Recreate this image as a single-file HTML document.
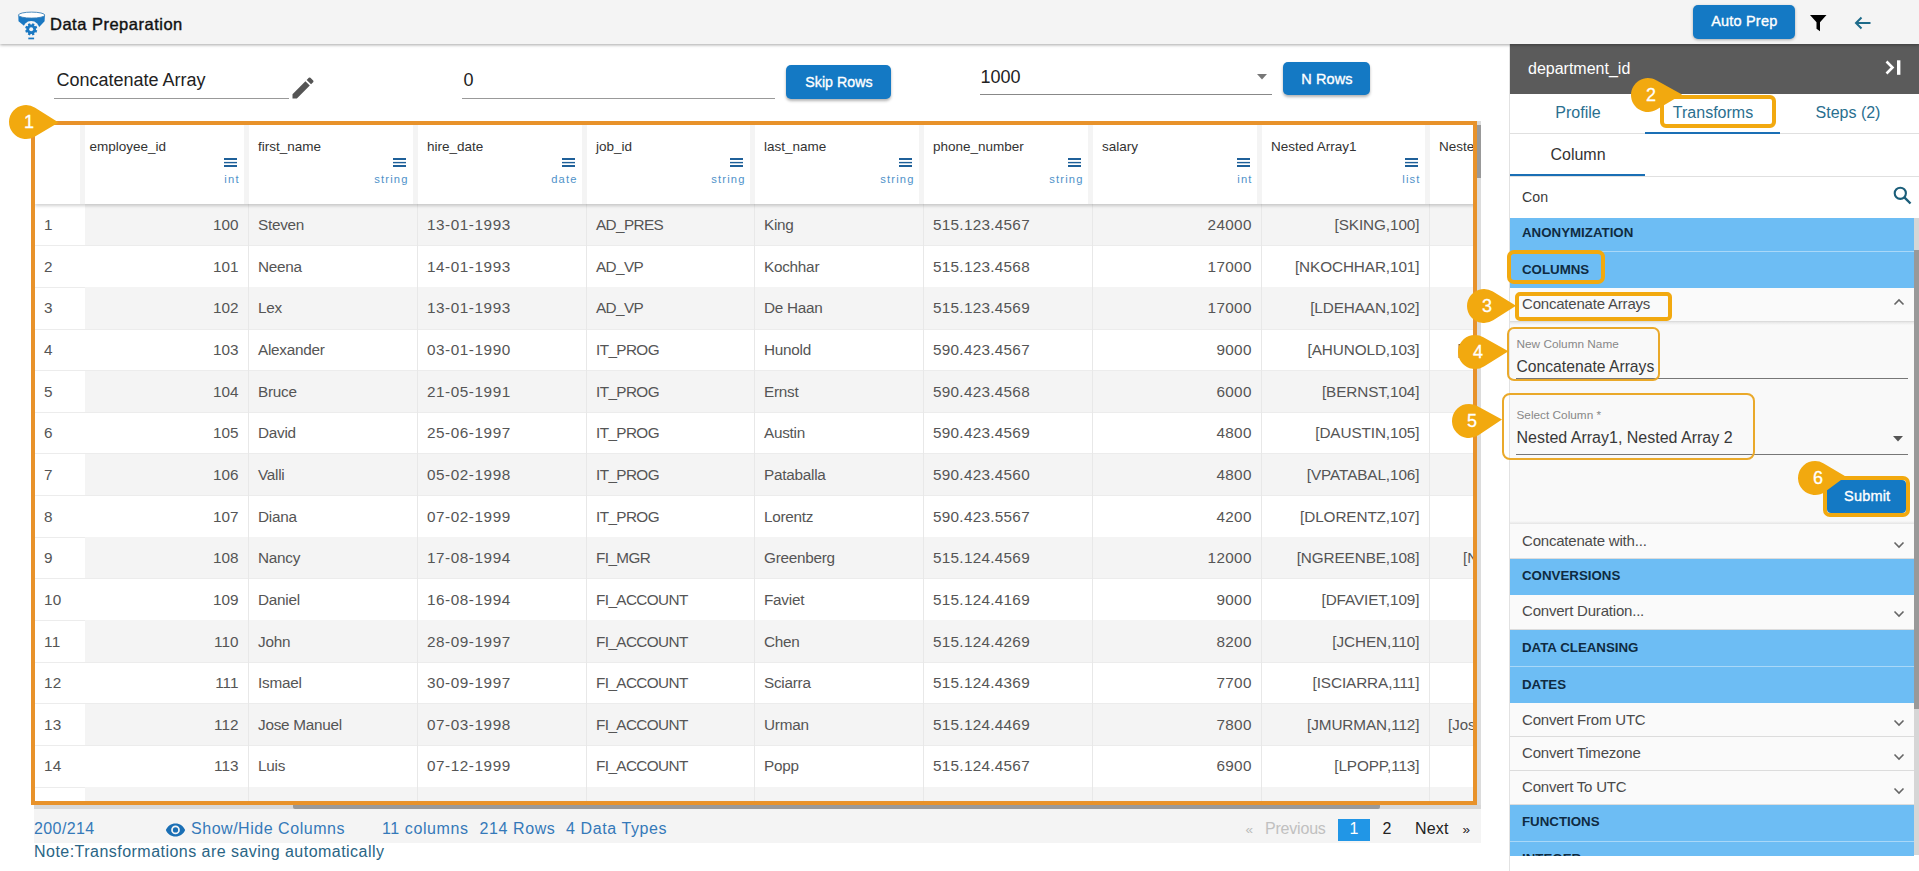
<!DOCTYPE html><html><head><meta charset="utf-8"><style>
html,body{margin:0;padding:0;}
body{width:1919px;height:871px;position:relative;overflow:hidden;background:#fff;font-family:"Liberation Sans", sans-serif;}
.t{position:absolute;line-height:20px;white-space:nowrap;}
.r{position:absolute;}
</style></head><body>

<div class="r" style="left:0px;top:0px;width:1919px;height:44px;background:#f4f4f4;box-shadow:0 1px 3px rgba(0,0,0,0.35);z-index:2"></div>
<div class="r" style="left:0;top:0;width:1919px;height:44px;z-index:3">
<svg class="r" style="left:14px;top:8px" width="36" height="34" viewBox="0 0 36 34">
<path d="M4.3,7.2 Q17.6,11.6 30.9,7.2 L30.6,13.3 L25.4,18.8 L17.2,28 L9.4,17.2 L4.5,13.3 Z" fill="#1a78c2"/>
<circle cx="17.2" cy="21.3" r="8.3" fill="#f4f4f4"/>
<ellipse cx="17.6" cy="7.1" rx="13.2" ry="3.0" fill="#fff" stroke="#3a80b8" stroke-width="0.9"/>
<circle cx="17.2" cy="21.3" r="4.8" fill="#1a78c2"/>
<rect x="16" y="15.2" width="2.4" height="2.5" transform="rotate(22.5 17.2 21.3)" fill="#1a78c2"/><rect x="16" y="15.2" width="2.4" height="2.5" transform="rotate(67.5 17.2 21.3)" fill="#1a78c2"/><rect x="16" y="15.2" width="2.4" height="2.5" transform="rotate(112.5 17.2 21.3)" fill="#1a78c2"/><rect x="16" y="15.2" width="2.4" height="2.5" transform="rotate(157.5 17.2 21.3)" fill="#1a78c2"/><rect x="16" y="15.2" width="2.4" height="2.5" transform="rotate(202.5 17.2 21.3)" fill="#1a78c2"/><rect x="16" y="15.2" width="2.4" height="2.5" transform="rotate(247.5 17.2 21.3)" fill="#1a78c2"/><rect x="16" y="15.2" width="2.4" height="2.5" transform="rotate(292.5 17.2 21.3)" fill="#1a78c2"/><rect x="16" y="15.2" width="2.4" height="2.5" transform="rotate(337.5 17.2 21.3)" fill="#1a78c2"/>
<circle cx="17.2" cy="21.3" r="2.0" fill="#f4f4f4"/>
<rect x="14.3" y="29.6" width="5.8" height="1.7" fill="#1a78c2"/>
</svg>
<div class="t" style="left:50px;top:14.48px;font-size:16.5px;color:#111;font-weight:400;letter-spacing:0.5px;-webkit-text-stroke:0.4px #111;">Data Preparation</div>
<div class="r" style="left:1693px;top:5px;width:102px;height:34px;background:#1479c4;border-radius:5px;box-shadow:0 1px 3px rgba(0,0,0,0.3)"></div>
<div class="t" style="left:1444.3px;width:600px;text-align:center;top:10.78px;font-size:14.5px;color:#fff;font-weight:400;letter-spacing:0.2px;-webkit-text-stroke:0.35px #fff;">Auto Prep</div>
<svg class="r" style="left:1809.5px;top:14.7px" width="17" height="17" viewBox="0 0 17 17"><path d="M0,0 L16.5,0 L10,7.3 L10,16.3 L6.5,13.8 L6.5,7.3 Z" fill="#000"/></svg>
<svg class="r" style="left:1854px;top:16px" width="18" height="14" viewBox="0 0 18 14"><path d="M16.5,7 L2,7 M7.5,1.5 L2,7 L7.5,12.5" fill="none" stroke="#1e6b8a" stroke-width="2"/></svg>
</div>
<div class="t" style="left:56.5px;top:69.76px;font-size:18px;color:#222;font-weight:400;">Concatenate Array</div>
<div class="r" style="left:54px;top:98px;width:235px;height:1px;background:#999"></div>
<svg class="r" style="left:288.5px;top:73.5px" width="28" height="28" viewBox="0 0 24 24"><path d="M3 17.25V21h3.75L17.81 9.94l-3.75-3.75L3 17.25zM20.71 7.04c.39-.39.39-1.02 0-1.41l-2.34-2.34a.9959.9959 0 0 0-1.41 0l-1.83 1.83 3.75 3.75 1.83-1.83z" fill="#555"/></svg>
<div class="t" style="left:463.5px;top:69.76px;font-size:18px;color:#222;font-weight:400;">0</div>
<div class="r" style="left:462px;top:98px;width:313px;height:1px;background:#999"></div>
<div class="r" style="left:786px;top:65px;width:105px;height:34px;background:#1479c4;border-radius:5px;box-shadow:0 2px 3px rgba(0,0,0,0.3)"></div>
<div class="t" style="left:539px;width:600px;text-align:center;top:71.78px;font-size:14.2px;color:#fff;font-weight:400;letter-spacing:0.05px;-webkit-text-stroke:0.35px #fff;">Skip Rows</div>
<div class="t" style="left:980.5px;top:66.96px;font-size:18px;color:#222;font-weight:400;">1000</div>
<div class="r" style="left:980px;top:94px;width:292px;height:1px;background:#888"></div>
<svg class="r" style="left:1257px;top:74px" width="10" height="6"><path d="M0,0 L10,0 L5,5.5 Z" fill="#777"/></svg>
<div class="r" style="left:1283px;top:62px;width:87px;height:33px;background:#1479c4;border-radius:5px;box-shadow:0 2px 3px rgba(0,0,0,0.3)"></div>
<div class="t" style="left:1027px;width:600px;text-align:center;top:68.98px;font-size:14.5px;color:#fff;font-weight:400;letter-spacing:0.1px;-webkit-text-stroke:0.35px #fff;">N Rows</div>
<div class="r" style="left:35px;top:125px;width:1438px;height:676px;overflow:hidden;background:#fff">
<div class="r" style="left:50px;top:79.0px;width:1514px;height:41.64px;background:#f4f4f4"></div>
<div class="r" style="left:0px;top:120.24px;width:1564px;height:1px;background:#ececec"></div>
<div class="r" style="left:0px;top:161.88px;width:1564px;height:1px;background:#ececec"></div>
<div class="r" style="left:50px;top:162.28px;width:1514px;height:41.64px;background:#f4f4f4"></div>
<div class="r" style="left:0px;top:203.52px;width:1564px;height:1px;background:#ececec"></div>
<div class="r" style="left:0px;top:245.16px;width:1564px;height:1px;background:#ececec"></div>
<div class="r" style="left:50px;top:245.56px;width:1514px;height:41.64px;background:#f4f4f4"></div>
<div class="r" style="left:0px;top:286.8px;width:1564px;height:1px;background:#ececec"></div>
<div class="r" style="left:0px;top:328.44px;width:1564px;height:1px;background:#ececec"></div>
<div class="r" style="left:50px;top:328.84px;width:1514px;height:41.64px;background:#f4f4f4"></div>
<div class="r" style="left:0px;top:370.08px;width:1564px;height:1px;background:#ececec"></div>
<div class="r" style="left:0px;top:411.72px;width:1564px;height:1px;background:#ececec"></div>
<div class="r" style="left:50px;top:412.12px;width:1514px;height:41.64px;background:#f4f4f4"></div>
<div class="r" style="left:0px;top:453.36px;width:1564px;height:1px;background:#ececec"></div>
<div class="r" style="left:0px;top:495.0px;width:1564px;height:1px;background:#ececec"></div>
<div class="r" style="left:50px;top:495.4px;width:1514px;height:41.64px;background:#f4f4f4"></div>
<div class="r" style="left:0px;top:536.64px;width:1564px;height:1px;background:#ececec"></div>
<div class="r" style="left:0px;top:578.28px;width:1564px;height:1px;background:#ececec"></div>
<div class="r" style="left:50px;top:578.68px;width:1514px;height:41.64px;background:#f4f4f4"></div>
<div class="r" style="left:0px;top:619.92px;width:1564px;height:1px;background:#ececec"></div>
<div class="r" style="left:0px;top:661.56px;width:1564px;height:1px;background:#ececec"></div>
<div class="r" style="left:50px;top:661.96px;width:1514px;height:41.64px;background:#f4f4f4"></div>
<div class="r" style="left:0px;top:703.2px;width:1564px;height:1px;background:#ececec"></div>
<div class="r" style="left:213px;top:79px;width:1px;height:700px;background:#e8e8e8"></div>
<div class="r" style="left:382px;top:79px;width:1px;height:700px;background:#e8e8e8"></div>
<div class="r" style="left:551px;top:79px;width:1px;height:700px;background:#e8e8e8"></div>
<div class="r" style="left:719px;top:79px;width:1px;height:700px;background:#e8e8e8"></div>
<div class="r" style="left:888px;top:79px;width:1px;height:700px;background:#e8e8e8"></div>
<div class="r" style="left:1057px;top:79px;width:1px;height:700px;background:#e8e8e8"></div>
<div class="r" style="left:1226px;top:79px;width:1px;height:700px;background:#e8e8e8"></div>
<div class="r" style="left:1394px;top:79px;width:1px;height:700px;background:#e8e8e8"></div>
<div class="r" style="left:1564px;top:79px;width:1px;height:700px;background:#e8e8e8"></div>
<div class="t" style="left:9px;top:90.10px;font-size:15.3px;color:#555;font-weight:400;letter-spacing:0.3px;">1</div>
<div class="t" style="left:-396.5px;width:600px;text-align:right;top:90.10px;font-size:15.3px;color:#555;font-weight:400;letter-spacing:0.0px;">100</div>
<div class="t" style="left:223px;top:90.10px;font-size:15.3px;color:#555;font-weight:400;letter-spacing:-0.25px;">Steven</div>
<div class="t" style="left:392px;top:90.10px;font-size:15.3px;color:#555;font-weight:400;letter-spacing:0.55px;">13-01-1993</div>
<div class="t" style="left:561px;top:90.10px;font-size:15.3px;color:#555;font-weight:400;letter-spacing:-0.6px;">AD_PRES</div>
<div class="t" style="left:729px;top:90.10px;font-size:15.3px;color:#555;font-weight:400;letter-spacing:-0.25px;">King</div>
<div class="t" style="left:898px;top:90.10px;font-size:15.3px;color:#555;font-weight:400;letter-spacing:0.28px;">515.123.4567</div>
<div class="t" style="left:616.8499999999999px;width:600px;text-align:right;top:90.10px;font-size:15.3px;color:#555;font-weight:400;letter-spacing:0.35px;">24000</div>
<div class="t" style="left:784.4000000000001px;width:600px;text-align:right;top:90.10px;font-size:15.3px;color:#555;font-weight:400;letter-spacing:-0.1px;">[SKING,100]</div>
<div class="t" style="left:9px;top:131.74px;font-size:15.3px;color:#555;font-weight:400;letter-spacing:0.3px;">2</div>
<div class="t" style="left:-396.5px;width:600px;text-align:right;top:131.74px;font-size:15.3px;color:#555;font-weight:400;letter-spacing:0.0px;">101</div>
<div class="t" style="left:223px;top:131.74px;font-size:15.3px;color:#555;font-weight:400;letter-spacing:-0.25px;">Neena</div>
<div class="t" style="left:392px;top:131.74px;font-size:15.3px;color:#555;font-weight:400;letter-spacing:0.55px;">14-01-1993</div>
<div class="t" style="left:561px;top:131.74px;font-size:15.3px;color:#555;font-weight:400;letter-spacing:-0.6px;">AD_VP</div>
<div class="t" style="left:729px;top:131.74px;font-size:15.3px;color:#555;font-weight:400;letter-spacing:-0.25px;">Kochhar</div>
<div class="t" style="left:898px;top:131.74px;font-size:15.3px;color:#555;font-weight:400;letter-spacing:0.28px;">515.123.4568</div>
<div class="t" style="left:616.8499999999999px;width:600px;text-align:right;top:131.74px;font-size:15.3px;color:#555;font-weight:400;letter-spacing:0.35px;">17000</div>
<div class="t" style="left:784.4000000000001px;width:600px;text-align:right;top:131.74px;font-size:15.3px;color:#555;font-weight:400;letter-spacing:-0.1px;">[NKOCHHAR,101]</div>
<div class="t" style="left:9px;top:173.38px;font-size:15.3px;color:#555;font-weight:400;letter-spacing:0.3px;">3</div>
<div class="t" style="left:-396.5px;width:600px;text-align:right;top:173.38px;font-size:15.3px;color:#555;font-weight:400;letter-spacing:0.0px;">102</div>
<div class="t" style="left:223px;top:173.38px;font-size:15.3px;color:#555;font-weight:400;letter-spacing:-0.25px;">Lex</div>
<div class="t" style="left:392px;top:173.38px;font-size:15.3px;color:#555;font-weight:400;letter-spacing:0.55px;">13-01-1993</div>
<div class="t" style="left:561px;top:173.38px;font-size:15.3px;color:#555;font-weight:400;letter-spacing:-0.6px;">AD_VP</div>
<div class="t" style="left:729px;top:173.38px;font-size:15.3px;color:#555;font-weight:400;letter-spacing:-0.25px;">De Haan</div>
<div class="t" style="left:898px;top:173.38px;font-size:15.3px;color:#555;font-weight:400;letter-spacing:0.28px;">515.123.4569</div>
<div class="t" style="left:616.8499999999999px;width:600px;text-align:right;top:173.38px;font-size:15.3px;color:#555;font-weight:400;letter-spacing:0.35px;">17000</div>
<div class="t" style="left:784.4000000000001px;width:600px;text-align:right;top:173.38px;font-size:15.3px;color:#555;font-weight:400;letter-spacing:-0.1px;">[LDEHAAN,102]</div>
<div class="t" style="left:9px;top:215.02px;font-size:15.3px;color:#555;font-weight:400;letter-spacing:0.3px;">4</div>
<div class="t" style="left:-396.5px;width:600px;text-align:right;top:215.02px;font-size:15.3px;color:#555;font-weight:400;letter-spacing:0.0px;">103</div>
<div class="t" style="left:223px;top:215.02px;font-size:15.3px;color:#555;font-weight:400;letter-spacing:-0.25px;">Alexander</div>
<div class="t" style="left:392px;top:215.02px;font-size:15.3px;color:#555;font-weight:400;letter-spacing:0.55px;">03-01-1990</div>
<div class="t" style="left:561px;top:215.02px;font-size:15.3px;color:#555;font-weight:400;letter-spacing:-0.6px;">IT_PROG</div>
<div class="t" style="left:729px;top:215.02px;font-size:15.3px;color:#555;font-weight:400;letter-spacing:-0.25px;">Hunold</div>
<div class="t" style="left:898px;top:215.02px;font-size:15.3px;color:#555;font-weight:400;letter-spacing:0.28px;">590.423.4567</div>
<div class="t" style="left:616.8499999999999px;width:600px;text-align:right;top:215.02px;font-size:15.3px;color:#555;font-weight:400;letter-spacing:0.35px;">9000</div>
<div class="t" style="left:784.4000000000001px;width:600px;text-align:right;top:215.02px;font-size:15.3px;color:#555;font-weight:400;letter-spacing:-0.1px;">[AHUNOLD,103]</div>
<div class="t" style="left:1422.5px;top:215.12px;font-size:15px;color:#555;font-weight:400;">[A</div>
<div class="t" style="left:9px;top:256.66px;font-size:15.3px;color:#555;font-weight:400;letter-spacing:0.3px;">5</div>
<div class="t" style="left:-396.5px;width:600px;text-align:right;top:256.66px;font-size:15.3px;color:#555;font-weight:400;letter-spacing:0.0px;">104</div>
<div class="t" style="left:223px;top:256.66px;font-size:15.3px;color:#555;font-weight:400;letter-spacing:-0.25px;">Bruce</div>
<div class="t" style="left:392px;top:256.66px;font-size:15.3px;color:#555;font-weight:400;letter-spacing:0.55px;">21-05-1991</div>
<div class="t" style="left:561px;top:256.66px;font-size:15.3px;color:#555;font-weight:400;letter-spacing:-0.6px;">IT_PROG</div>
<div class="t" style="left:729px;top:256.66px;font-size:15.3px;color:#555;font-weight:400;letter-spacing:-0.25px;">Ernst</div>
<div class="t" style="left:898px;top:256.66px;font-size:15.3px;color:#555;font-weight:400;letter-spacing:0.28px;">590.423.4568</div>
<div class="t" style="left:616.8499999999999px;width:600px;text-align:right;top:256.66px;font-size:15.3px;color:#555;font-weight:400;letter-spacing:0.35px;">6000</div>
<div class="t" style="left:784.4000000000001px;width:600px;text-align:right;top:256.66px;font-size:15.3px;color:#555;font-weight:400;letter-spacing:-0.1px;">[BERNST,104]</div>
<div class="t" style="left:9px;top:298.30px;font-size:15.3px;color:#555;font-weight:400;letter-spacing:0.3px;">6</div>
<div class="t" style="left:-396.5px;width:600px;text-align:right;top:298.30px;font-size:15.3px;color:#555;font-weight:400;letter-spacing:0.0px;">105</div>
<div class="t" style="left:223px;top:298.30px;font-size:15.3px;color:#555;font-weight:400;letter-spacing:-0.25px;">David</div>
<div class="t" style="left:392px;top:298.30px;font-size:15.3px;color:#555;font-weight:400;letter-spacing:0.55px;">25-06-1997</div>
<div class="t" style="left:561px;top:298.30px;font-size:15.3px;color:#555;font-weight:400;letter-spacing:-0.6px;">IT_PROG</div>
<div class="t" style="left:729px;top:298.30px;font-size:15.3px;color:#555;font-weight:400;letter-spacing:-0.25px;">Austin</div>
<div class="t" style="left:898px;top:298.30px;font-size:15.3px;color:#555;font-weight:400;letter-spacing:0.28px;">590.423.4569</div>
<div class="t" style="left:616.8499999999999px;width:600px;text-align:right;top:298.30px;font-size:15.3px;color:#555;font-weight:400;letter-spacing:0.35px;">4800</div>
<div class="t" style="left:784.4000000000001px;width:600px;text-align:right;top:298.30px;font-size:15.3px;color:#555;font-weight:400;letter-spacing:-0.1px;">[DAUSTIN,105]</div>
<div class="t" style="left:9px;top:339.94px;font-size:15.3px;color:#555;font-weight:400;letter-spacing:0.3px;">7</div>
<div class="t" style="left:-396.5px;width:600px;text-align:right;top:339.94px;font-size:15.3px;color:#555;font-weight:400;letter-spacing:0.0px;">106</div>
<div class="t" style="left:223px;top:339.94px;font-size:15.3px;color:#555;font-weight:400;letter-spacing:-0.25px;">Valli</div>
<div class="t" style="left:392px;top:339.94px;font-size:15.3px;color:#555;font-weight:400;letter-spacing:0.55px;">05-02-1998</div>
<div class="t" style="left:561px;top:339.94px;font-size:15.3px;color:#555;font-weight:400;letter-spacing:-0.6px;">IT_PROG</div>
<div class="t" style="left:729px;top:339.94px;font-size:15.3px;color:#555;font-weight:400;letter-spacing:-0.25px;">Pataballa</div>
<div class="t" style="left:898px;top:339.94px;font-size:15.3px;color:#555;font-weight:400;letter-spacing:0.28px;">590.423.4560</div>
<div class="t" style="left:616.8499999999999px;width:600px;text-align:right;top:339.94px;font-size:15.3px;color:#555;font-weight:400;letter-spacing:0.35px;">4800</div>
<div class="t" style="left:784.4000000000001px;width:600px;text-align:right;top:339.94px;font-size:15.3px;color:#555;font-weight:400;letter-spacing:-0.1px;">[VPATABAL,106]</div>
<div class="t" style="left:9px;top:381.58px;font-size:15.3px;color:#555;font-weight:400;letter-spacing:0.3px;">8</div>
<div class="t" style="left:-396.5px;width:600px;text-align:right;top:381.58px;font-size:15.3px;color:#555;font-weight:400;letter-spacing:0.0px;">107</div>
<div class="t" style="left:223px;top:381.58px;font-size:15.3px;color:#555;font-weight:400;letter-spacing:-0.25px;">Diana</div>
<div class="t" style="left:392px;top:381.58px;font-size:15.3px;color:#555;font-weight:400;letter-spacing:0.55px;">07-02-1999</div>
<div class="t" style="left:561px;top:381.58px;font-size:15.3px;color:#555;font-weight:400;letter-spacing:-0.6px;">IT_PROG</div>
<div class="t" style="left:729px;top:381.58px;font-size:15.3px;color:#555;font-weight:400;letter-spacing:-0.25px;">Lorentz</div>
<div class="t" style="left:898px;top:381.58px;font-size:15.3px;color:#555;font-weight:400;letter-spacing:0.28px;">590.423.5567</div>
<div class="t" style="left:616.8499999999999px;width:600px;text-align:right;top:381.58px;font-size:15.3px;color:#555;font-weight:400;letter-spacing:0.35px;">4200</div>
<div class="t" style="left:784.4000000000001px;width:600px;text-align:right;top:381.58px;font-size:15.3px;color:#555;font-weight:400;letter-spacing:-0.1px;">[DLORENTZ,107]</div>
<div class="t" style="left:9px;top:423.22px;font-size:15.3px;color:#555;font-weight:400;letter-spacing:0.3px;">9</div>
<div class="t" style="left:-396.5px;width:600px;text-align:right;top:423.22px;font-size:15.3px;color:#555;font-weight:400;letter-spacing:0.0px;">108</div>
<div class="t" style="left:223px;top:423.22px;font-size:15.3px;color:#555;font-weight:400;letter-spacing:-0.25px;">Nancy</div>
<div class="t" style="left:392px;top:423.22px;font-size:15.3px;color:#555;font-weight:400;letter-spacing:0.55px;">17-08-1994</div>
<div class="t" style="left:561px;top:423.22px;font-size:15.3px;color:#555;font-weight:400;letter-spacing:-0.6px;">FI_MGR</div>
<div class="t" style="left:729px;top:423.22px;font-size:15.3px;color:#555;font-weight:400;letter-spacing:-0.25px;">Greenberg</div>
<div class="t" style="left:898px;top:423.22px;font-size:15.3px;color:#555;font-weight:400;letter-spacing:0.28px;">515.124.4569</div>
<div class="t" style="left:616.8499999999999px;width:600px;text-align:right;top:423.22px;font-size:15.3px;color:#555;font-weight:400;letter-spacing:0.35px;">12000</div>
<div class="t" style="left:784.4000000000001px;width:600px;text-align:right;top:423.22px;font-size:15.3px;color:#555;font-weight:400;letter-spacing:-0.1px;">[NGREENBE,108]</div>
<div class="t" style="left:1428px;top:423.32px;font-size:15px;color:#555;font-weight:400;">[N</div>
<div class="t" style="left:9px;top:464.86px;font-size:15.3px;color:#555;font-weight:400;letter-spacing:0.3px;">10</div>
<div class="t" style="left:-396.5px;width:600px;text-align:right;top:464.86px;font-size:15.3px;color:#555;font-weight:400;letter-spacing:0.0px;">109</div>
<div class="t" style="left:223px;top:464.86px;font-size:15.3px;color:#555;font-weight:400;letter-spacing:-0.25px;">Daniel</div>
<div class="t" style="left:392px;top:464.86px;font-size:15.3px;color:#555;font-weight:400;letter-spacing:0.55px;">16-08-1994</div>
<div class="t" style="left:561px;top:464.86px;font-size:15.3px;color:#555;font-weight:400;letter-spacing:-0.6px;">FI_ACCOUNT</div>
<div class="t" style="left:729px;top:464.86px;font-size:15.3px;color:#555;font-weight:400;letter-spacing:-0.25px;">Faviet</div>
<div class="t" style="left:898px;top:464.86px;font-size:15.3px;color:#555;font-weight:400;letter-spacing:0.28px;">515.124.4169</div>
<div class="t" style="left:616.8499999999999px;width:600px;text-align:right;top:464.86px;font-size:15.3px;color:#555;font-weight:400;letter-spacing:0.35px;">9000</div>
<div class="t" style="left:784.4000000000001px;width:600px;text-align:right;top:464.86px;font-size:15.3px;color:#555;font-weight:400;letter-spacing:-0.1px;">[DFAVIET,109]</div>
<div class="t" style="left:9px;top:506.50px;font-size:15.3px;color:#555;font-weight:400;letter-spacing:0.3px;">11</div>
<div class="t" style="left:-396.5px;width:600px;text-align:right;top:506.50px;font-size:15.3px;color:#555;font-weight:400;letter-spacing:0.0px;">110</div>
<div class="t" style="left:223px;top:506.50px;font-size:15.3px;color:#555;font-weight:400;letter-spacing:-0.25px;">John</div>
<div class="t" style="left:392px;top:506.50px;font-size:15.3px;color:#555;font-weight:400;letter-spacing:0.55px;">28-09-1997</div>
<div class="t" style="left:561px;top:506.50px;font-size:15.3px;color:#555;font-weight:400;letter-spacing:-0.6px;">FI_ACCOUNT</div>
<div class="t" style="left:729px;top:506.50px;font-size:15.3px;color:#555;font-weight:400;letter-spacing:-0.25px;">Chen</div>
<div class="t" style="left:898px;top:506.50px;font-size:15.3px;color:#555;font-weight:400;letter-spacing:0.28px;">515.124.4269</div>
<div class="t" style="left:616.8499999999999px;width:600px;text-align:right;top:506.50px;font-size:15.3px;color:#555;font-weight:400;letter-spacing:0.35px;">8200</div>
<div class="t" style="left:784.4000000000001px;width:600px;text-align:right;top:506.50px;font-size:15.3px;color:#555;font-weight:400;letter-spacing:-0.1px;">[JCHEN,110]</div>
<div class="t" style="left:9px;top:548.14px;font-size:15.3px;color:#555;font-weight:400;letter-spacing:0.3px;">12</div>
<div class="t" style="left:-396.5px;width:600px;text-align:right;top:548.14px;font-size:15.3px;color:#555;font-weight:400;letter-spacing:0.0px;">111</div>
<div class="t" style="left:223px;top:548.14px;font-size:15.3px;color:#555;font-weight:400;letter-spacing:-0.25px;">Ismael</div>
<div class="t" style="left:392px;top:548.14px;font-size:15.3px;color:#555;font-weight:400;letter-spacing:0.55px;">30-09-1997</div>
<div class="t" style="left:561px;top:548.14px;font-size:15.3px;color:#555;font-weight:400;letter-spacing:-0.6px;">FI_ACCOUNT</div>
<div class="t" style="left:729px;top:548.14px;font-size:15.3px;color:#555;font-weight:400;letter-spacing:-0.25px;">Sciarra</div>
<div class="t" style="left:898px;top:548.14px;font-size:15.3px;color:#555;font-weight:400;letter-spacing:0.28px;">515.124.4369</div>
<div class="t" style="left:616.8499999999999px;width:600px;text-align:right;top:548.14px;font-size:15.3px;color:#555;font-weight:400;letter-spacing:0.35px;">7700</div>
<div class="t" style="left:784.4000000000001px;width:600px;text-align:right;top:548.14px;font-size:15.3px;color:#555;font-weight:400;letter-spacing:-0.1px;">[ISCIARRA,111]</div>
<div class="t" style="left:9px;top:589.78px;font-size:15.3px;color:#555;font-weight:400;letter-spacing:0.3px;">13</div>
<div class="t" style="left:-396.5px;width:600px;text-align:right;top:589.78px;font-size:15.3px;color:#555;font-weight:400;letter-spacing:0.0px;">112</div>
<div class="t" style="left:223px;top:589.78px;font-size:15.3px;color:#555;font-weight:400;letter-spacing:-0.25px;">Jose Manuel</div>
<div class="t" style="left:392px;top:589.78px;font-size:15.3px;color:#555;font-weight:400;letter-spacing:0.55px;">07-03-1998</div>
<div class="t" style="left:561px;top:589.78px;font-size:15.3px;color:#555;font-weight:400;letter-spacing:-0.6px;">FI_ACCOUNT</div>
<div class="t" style="left:729px;top:589.78px;font-size:15.3px;color:#555;font-weight:400;letter-spacing:-0.25px;">Urman</div>
<div class="t" style="left:898px;top:589.78px;font-size:15.3px;color:#555;font-weight:400;letter-spacing:0.28px;">515.124.4469</div>
<div class="t" style="left:616.8499999999999px;width:600px;text-align:right;top:589.78px;font-size:15.3px;color:#555;font-weight:400;letter-spacing:0.35px;">7800</div>
<div class="t" style="left:784.4000000000001px;width:600px;text-align:right;top:589.78px;font-size:15.3px;color:#555;font-weight:400;letter-spacing:-0.1px;">[JMURMAN,112]</div>
<div class="t" style="left:1413px;top:589.88px;font-size:15px;color:#555;font-weight:400;">[Jos</div>
<div class="t" style="left:9px;top:631.42px;font-size:15.3px;color:#555;font-weight:400;letter-spacing:0.3px;">14</div>
<div class="t" style="left:-396.5px;width:600px;text-align:right;top:631.42px;font-size:15.3px;color:#555;font-weight:400;letter-spacing:0.0px;">113</div>
<div class="t" style="left:223px;top:631.42px;font-size:15.3px;color:#555;font-weight:400;letter-spacing:-0.25px;">Luis</div>
<div class="t" style="left:392px;top:631.42px;font-size:15.3px;color:#555;font-weight:400;letter-spacing:0.55px;">07-12-1999</div>
<div class="t" style="left:561px;top:631.42px;font-size:15.3px;color:#555;font-weight:400;letter-spacing:-0.6px;">FI_ACCOUNT</div>
<div class="t" style="left:729px;top:631.42px;font-size:15.3px;color:#555;font-weight:400;letter-spacing:-0.25px;">Popp</div>
<div class="t" style="left:898px;top:631.42px;font-size:15.3px;color:#555;font-weight:400;letter-spacing:0.28px;">515.124.4567</div>
<div class="t" style="left:616.8499999999999px;width:600px;text-align:right;top:631.42px;font-size:15.3px;color:#555;font-weight:400;letter-spacing:0.35px;">6900</div>
<div class="t" style="left:784.4000000000001px;width:600px;text-align:right;top:631.42px;font-size:15.3px;color:#555;font-weight:400;letter-spacing:-0.1px;">[LPOPP,113]</div>
<div class="r" style="left:0px;top:0px;width:1564px;height:79px;background:#fff;box-shadow:0 2px 3px rgba(0,0,0,0.18)"></div>
<div class="r" style="left:45px;top:0px;width:5px;height:79px;background:#f4f4f4"></div>
<div class="r" style="left:209px;top:0px;width:5px;height:79px;background:#f4f4f4"></div>
<div class="r" style="left:378px;top:0px;width:5px;height:79px;background:#f4f4f4"></div>
<div class="r" style="left:547px;top:0px;width:5px;height:79px;background:#f4f4f4"></div>
<div class="r" style="left:715px;top:0px;width:5px;height:79px;background:#f4f4f4"></div>
<div class="r" style="left:884px;top:0px;width:5px;height:79px;background:#f4f4f4"></div>
<div class="r" style="left:1053px;top:0px;width:5px;height:79px;background:#f4f4f4"></div>
<div class="r" style="left:1222px;top:0px;width:5px;height:79px;background:#f4f4f4"></div>
<div class="r" style="left:1390px;top:0px;width:5px;height:79px;background:#f4f4f4"></div>
<div class="r" style="left:1560px;top:0px;width:5px;height:79px;background:#f4f4f4"></div>
<div class="t" style="left:54.5px;top:12.12px;font-size:13.5px;color:#333;font-weight:400;">employee_id</div>
<svg class="r" style="left:189px;top:33px" width="13" height="9"><rect x="0" y="0" width="13" height="2" fill="#1f6099"/><rect x="0" y="3.9" width="13" height="1.4" fill="#1f6099"/><rect x="0" y="7" width="13" height="2" fill="#1f6099"/></svg>
<div class="t" style="left:-395.3px;width:600px;text-align:right;top:43.92px;font-size:11.2px;color:#4f92c9;font-weight:400;letter-spacing:1.2px;">int</div>
<div class="t" style="left:223px;top:12.12px;font-size:13.5px;color:#333;font-weight:400;">first_name</div>
<svg class="r" style="left:358px;top:33px" width="13" height="9"><rect x="0" y="0" width="13" height="2" fill="#1f6099"/><rect x="0" y="3.9" width="13" height="1.4" fill="#1f6099"/><rect x="0" y="7" width="13" height="2" fill="#1f6099"/></svg>
<div class="t" style="left:-226.3px;width:600px;text-align:right;top:43.92px;font-size:11.2px;color:#4f92c9;font-weight:400;letter-spacing:1.2px;">string</div>
<div class="t" style="left:392px;top:12.12px;font-size:13.5px;color:#333;font-weight:400;">hire_date</div>
<svg class="r" style="left:527px;top:33px" width="13" height="9"><rect x="0" y="0" width="13" height="2" fill="#1f6099"/><rect x="0" y="3.9" width="13" height="1.4" fill="#1f6099"/><rect x="0" y="7" width="13" height="2" fill="#1f6099"/></svg>
<div class="t" style="left:-57.299999999999955px;width:600px;text-align:right;top:43.92px;font-size:11.2px;color:#4f92c9;font-weight:400;letter-spacing:1.2px;">date</div>
<div class="t" style="left:561px;top:12.12px;font-size:13.5px;color:#333;font-weight:400;">job_id</div>
<svg class="r" style="left:695px;top:33px" width="13" height="9"><rect x="0" y="0" width="13" height="2" fill="#1f6099"/><rect x="0" y="3.9" width="13" height="1.4" fill="#1f6099"/><rect x="0" y="7" width="13" height="2" fill="#1f6099"/></svg>
<div class="t" style="left:110.70000000000005px;width:600px;text-align:right;top:43.92px;font-size:11.2px;color:#4f92c9;font-weight:400;letter-spacing:1.2px;">string</div>
<div class="t" style="left:729px;top:12.12px;font-size:13.5px;color:#333;font-weight:400;">last_name</div>
<svg class="r" style="left:864px;top:33px" width="13" height="9"><rect x="0" y="0" width="13" height="2" fill="#1f6099"/><rect x="0" y="3.9" width="13" height="1.4" fill="#1f6099"/><rect x="0" y="7" width="13" height="2" fill="#1f6099"/></svg>
<div class="t" style="left:279.70000000000005px;width:600px;text-align:right;top:43.92px;font-size:11.2px;color:#4f92c9;font-weight:400;letter-spacing:1.2px;">string</div>
<div class="t" style="left:898px;top:12.12px;font-size:13.5px;color:#333;font-weight:400;">phone_number</div>
<svg class="r" style="left:1033px;top:33px" width="13" height="9"><rect x="0" y="0" width="13" height="2" fill="#1f6099"/><rect x="0" y="3.9" width="13" height="1.4" fill="#1f6099"/><rect x="0" y="7" width="13" height="2" fill="#1f6099"/></svg>
<div class="t" style="left:448.70000000000005px;width:600px;text-align:right;top:43.92px;font-size:11.2px;color:#4f92c9;font-weight:400;letter-spacing:1.2px;">string</div>
<div class="t" style="left:1067px;top:12.12px;font-size:13.5px;color:#333;font-weight:400;">salary</div>
<svg class="r" style="left:1202px;top:33px" width="13" height="9"><rect x="0" y="0" width="13" height="2" fill="#1f6099"/><rect x="0" y="3.9" width="13" height="1.4" fill="#1f6099"/><rect x="0" y="7" width="13" height="2" fill="#1f6099"/></svg>
<div class="t" style="left:617.7px;width:600px;text-align:right;top:43.92px;font-size:11.2px;color:#4f92c9;font-weight:400;letter-spacing:1.2px;">int</div>
<div class="t" style="left:1236px;top:12.12px;font-size:13.5px;color:#333;font-weight:400;">Nested Array1</div>
<svg class="r" style="left:1370px;top:33px" width="13" height="9"><rect x="0" y="0" width="13" height="2" fill="#1f6099"/><rect x="0" y="3.9" width="13" height="1.4" fill="#1f6099"/><rect x="0" y="7" width="13" height="2" fill="#1f6099"/></svg>
<div class="t" style="left:785.7px;width:600px;text-align:right;top:43.92px;font-size:11.2px;color:#4f92c9;font-weight:400;letter-spacing:1.2px;">list</div>
<div class="t" style="left:1404px;top:12.12px;font-size:13.5px;color:#333;font-weight:400;">Nested Array2</div>
</div>
<div class="r" style="left:1477px;top:121px;width:4px;height:688px;background:#dcdcdc"></div>
<div class="r" style="left:1477px;top:125px;width:4px;height:53px;background:#999"></div>
<div class="r" style="left:34px;top:805px;width:1447px;height:4px;background:#d8d8d8"></div>
<div class="r" style="left:293px;top:805px;width:1087px;height:4px;background:#999;border-radius:0 0 2px 2px"></div>
<div class="r" style="left:31px;top:121px;width:1438px;height:676px;border:4px solid #e8922a"></div>
<div class="r" style="left:34px;top:809px;width:1447px;height:34px;background:#f4f4f4"></div>
<div class="t" style="left:34px;top:819.46px;font-size:16px;color:#3479b9;font-weight:400;letter-spacing:0.4px;">200/214</div>
<svg class="r" style="left:165px;top:822px" width="21" height="15" viewBox="0 0 24 16"><path d="M12 1C7 1 2.7 4.1 1 8.5 2.7 12.9 7 16 12 16s9.3-3.1 11-7.5C21.3 4.1 17 1 12 1zm0 12.5a5 5 0 1 1 0-10 5 5 0 0 1 0 10zm0-8a3 3 0 1 0 0 6 3 3 0 0 0 0-6z" fill="#1a6fb5"/></svg>
<div class="t" style="left:191px;top:819.46px;font-size:16px;color:#3479b9;font-weight:400;letter-spacing:0.53px;">Show/Hide Columns</div>
<div class="t" style="left:382px;top:819.46px;font-size:16px;color:#3479b9;font-weight:400;letter-spacing:0.6px;">11 columns</div>
<div class="t" style="left:479.5px;top:819.46px;font-size:16px;color:#3479b9;font-weight:400;letter-spacing:0.6px;">214 Rows</div>
<div class="t" style="left:566px;top:819.46px;font-size:16px;color:#3479b9;font-weight:400;letter-spacing:0.6px;">4 Data Types</div>
<div class="t" style="left:1245.5px;top:819.82px;font-size:13.5px;color:#bbb;font-weight:400;">«</div>
<div class="t" style="left:1265px;top:819.46px;font-size:16px;color:#c0c0c0;font-weight:400;letter-spacing:-0.2px;">Previous</div>
<div class="r" style="left:1338px;top:819px;width:32px;height:22px;background:#2196e6"></div>
<div class="t" style="left:1054px;width:600px;text-align:center;top:819.46px;font-size:16px;color:#fff;font-weight:400;">1</div>
<div class="t" style="left:1087px;width:600px;text-align:center;top:819.46px;font-size:16px;color:#222;font-weight:400;">2</div>
<div class="t" style="left:1415px;top:819.46px;font-size:16px;color:#222;font-weight:400;letter-spacing:0.2px;">Next</div>
<div class="t" style="left:1462.5px;top:819.82px;font-size:13.5px;color:#222;font-weight:400;">»</div>
<div class="t" style="left:34px;top:842.46px;font-size:16px;color:#2a6585;font-weight:400;letter-spacing:0.47px;">Note:Transformations are saving automatically</div>
<div class="r" style="left:1509px;top:44px;width:1px;height:827px;background:#e2e2e2"></div>
<div class="r" style="left:1510px;top:44px;width:409px;height:50px;background:#5b5b5b"></div>
<div class="t" style="left:1528px;top:58.66px;font-size:16px;color:#fff;font-weight:400;">department_id</div>
<svg class="r" style="left:1884px;top:59px" width="18" height="17" viewBox="0 0 18 17"><path d="M2.5,2.5 L8.5,8.5 L2.5,14.5" fill="none" stroke="#fff" stroke-width="2.6"/><rect x="13" y="1.3" width="3.4" height="14.5" fill="#fff"/></svg>
<div class="r" style="left:1510px;top:94px;width:409px;height:40px;background:#fff"></div>
<div class="r" style="left:1510px;top:133px;width:409px;height:1px;background:#e0e0e0"></div>
<div class="r" style="left:1645px;top:132px;width:135px;height:2px;background:#1a6fb5"></div>
<div class="t" style="left:1278px;width:600px;text-align:center;top:103.46px;font-size:16px;color:#2a6f8f;font-weight:400;">Profile</div>
<div class="t" style="left:1413px;width:600px;text-align:center;top:103.46px;font-size:16px;color:#2a6f8f;font-weight:400;">Transforms</div>
<div class="t" style="left:1548px;width:600px;text-align:center;top:103.46px;font-size:16px;color:#2a6f8f;font-weight:400;">Steps (2)</div>
<div class="r" style="left:1510px;top:134px;width:409px;height:42px;background:#fff"></div>
<div class="r" style="left:1510px;top:176px;width:409px;height:1px;background:#e0e0e0"></div>
<div class="r" style="left:1510px;top:174px;width:135px;height:2px;background:#1a6fb5"></div>
<div class="t" style="left:1278px;width:600px;text-align:center;top:144.66px;font-size:16px;color:#333;font-weight:400;">Column</div>
<div class="t" style="left:1522px;top:186.88px;font-size:14.2px;color:#3a3a3a;font-weight:400;">Con</div>
<svg class="r" style="left:1893px;top:186px" width="19" height="19" viewBox="0 0 19 19"><circle cx="7.3" cy="7.3" r="5.6" fill="none" stroke="#1b5e7a" stroke-width="2.1"/><path d="M11.4,11.4 L17.5,17.5" stroke="#1b5e7a" stroke-width="2.4"/></svg>
<div class="r" style="left:1510px;top:218px;width:404px;height:33px;background:#6dbdf4"></div>
<div class="t" style="left:1522px;top:222.59px;font-size:13.3px;color:#0f2b42;font-weight:700;">ANONYMIZATION</div>
<div class="r" style="left:1510px;top:251px;width:404px;height:1px;background:#a9d8f8"></div>
<div class="r" style="left:1510px;top:252px;width:404px;height:36px;background:#6dbdf4"></div>
<div class="t" style="left:1522px;top:259.89px;font-size:13.3px;color:#0f2b42;font-weight:700;">COLUMNS</div>
<div class="r" style="left:1510px;top:288px;width:404px;height:34px;background:#fafafa;border-bottom:1px solid #dcdcdc;box-sizing:border-box"></div>
<div class="t" style="left:1522px;top:294.30px;font-size:15px;color:#4a4a4a;font-weight:400;letter-spacing:-0.2px;">Concatenate Arrays</div>
<svg class="r" style="left:1893px;top:298.0px" width="12" height="8"><path d="M1.5,6.5 L6,2 L10.5,6.5" fill="none" stroke="#666" stroke-width="1.6"/></svg>
<div class="r" style="left:1510px;top:322px;width:404px;height:202px;background:#f9f9f9"></div>
<div class="r" style="left:1510px;top:322px;width:404px;height:3px;background:linear-gradient(#e6e6e6,#f9f9f9)"></div>
<div class="t" style="left:1516.5px;top:333.81px;font-size:11.8px;color:#888;font-weight:400;">New Column Name</div>
<div class="t" style="left:1516.5px;top:357.36px;font-size:15.7px;color:#383838;font-weight:400;">Concatenate Arrays</div>
<div class="r" style="left:1516px;top:378px;width:392px;height:1px;background:#777"></div>
<div class="t" style="left:1516.5px;top:404.91px;font-size:11.8px;color:#888;font-weight:400;">Select Column *</div>
<div class="t" style="left:1516.5px;top:428.26px;font-size:16px;color:#383838;font-weight:400;">Nested Array1, Nested Array 2</div>
<div class="r" style="left:1516px;top:454px;width:392px;height:1px;background:#777"></div>
<svg class="r" style="left:1893px;top:436px" width="10" height="6"><path d="M0,0 L10,0 L5,5.5 Z" fill="#555"/></svg>
<div class="r" style="left:1827px;top:480px;width:79px;height:33px;background:#1479c4;border-radius:4px"></div>
<div class="t" style="left:1567.2px;width:600px;text-align:center;top:486.08px;font-size:14.5px;color:#fff;font-weight:400;letter-spacing:0.2px;-webkit-text-stroke:0.35px #fff;">Submit</div>
<div class="r" style="left:1510px;top:521px;width:404px;height:3px;background:linear-gradient(#f9f9f9,#e4e4e4)"></div>
<div class="r" style="left:1510px;top:524px;width:404px;height:35px;background:#fafafa;border-bottom:1px solid #dcdcdc;box-sizing:border-box"></div>
<div class="t" style="left:1522px;top:531.10px;font-size:15px;color:#4a4a4a;font-weight:400;letter-spacing:-0.2px;">Concatenate with...</div>
<svg class="r" style="left:1893px;top:540.7px" width="12" height="8"><path d="M1.5,1.5 L6,6 L10.5,1.5" fill="none" stroke="#666" stroke-width="1.6"/></svg>
<div class="r" style="left:1510px;top:559px;width:404px;height:36px;background:#6dbdf4"></div>
<div class="t" style="left:1522px;top:566.39px;font-size:13.3px;color:#0f2b42;font-weight:700;">CONVERSIONS</div>
<div class="r" style="left:1510px;top:595px;width:404px;height:35px;background:#fafafa;border-bottom:1px solid #dcdcdc;box-sizing:border-box"></div>
<div class="t" style="left:1522px;top:600.80px;font-size:15px;color:#4a4a4a;font-weight:400;letter-spacing:-0.2px;">Convert Duration...</div>
<svg class="r" style="left:1893px;top:610.4px" width="12" height="8"><path d="M1.5,1.5 L6,6 L10.5,1.5" fill="none" stroke="#666" stroke-width="1.6"/></svg>
<div class="r" style="left:1510px;top:630px;width:404px;height:36px;background:#6dbdf4"></div>
<div class="t" style="left:1522px;top:637.59px;font-size:13.3px;color:#0f2b42;font-weight:700;">DATA CLEANSING</div>
<div class="r" style="left:1510px;top:666px;width:404px;height:1px;background:#a9d8f8"></div>
<div class="r" style="left:1510px;top:667px;width:404px;height:36px;background:#6dbdf4"></div>
<div class="t" style="left:1522px;top:674.59px;font-size:13.3px;color:#0f2b42;font-weight:700;">DATES</div>
<div class="r" style="left:1510px;top:703px;width:404px;height:34px;background:#fafafa;border-bottom:1px solid #dcdcdc;box-sizing:border-box"></div>
<div class="t" style="left:1522px;top:709.50px;font-size:15px;color:#4a4a4a;font-weight:400;letter-spacing:-0.2px;">Convert From UTC</div>
<svg class="r" style="left:1893px;top:719.1px" width="12" height="8"><path d="M1.5,1.5 L6,6 L10.5,1.5" fill="none" stroke="#666" stroke-width="1.6"/></svg>
<div class="r" style="left:1510px;top:737px;width:404px;height:34px;background:#fafafa;border-bottom:1px solid #dcdcdc;box-sizing:border-box"></div>
<div class="t" style="left:1522px;top:743.30px;font-size:15px;color:#4a4a4a;font-weight:400;letter-spacing:-0.2px;">Convert Timezone</div>
<svg class="r" style="left:1893px;top:752.9px" width="12" height="8"><path d="M1.5,1.5 L6,6 L10.5,1.5" fill="none" stroke="#666" stroke-width="1.6"/></svg>
<div class="r" style="left:1510px;top:771px;width:404px;height:34px;background:#fafafa;border-bottom:1px solid #dcdcdc;box-sizing:border-box"></div>
<div class="t" style="left:1522px;top:777.20px;font-size:15px;color:#4a4a4a;font-weight:400;letter-spacing:-0.2px;">Convert To UTC</div>
<svg class="r" style="left:1893px;top:786.8px" width="12" height="8"><path d="M1.5,1.5 L6,6 L10.5,1.5" fill="none" stroke="#666" stroke-width="1.6"/></svg>
<div class="r" style="left:1510px;top:805px;width:404px;height:36px;background:#6dbdf4"></div>
<div class="t" style="left:1522px;top:812.39px;font-size:13.3px;color:#0f2b42;font-weight:700;">FUNCTIONS</div>
<div class="r" style="left:1510px;top:841px;width:404px;height:1px;background:#a9d8f8"></div>
<div class="r" style="left:1510px;top:842px;width:404px;height:14px;overflow:hidden">
<div class="r" style="left:0px;top:0px;width:404px;height:14px;background:#6dbdf4"></div>
<div class="t" style="left:12px;top:6.89px;font-size:13.3px;color:#0f2b42;font-weight:700;">INTEGER</div>
</div>
<div class="r" style="left:1914px;top:218px;width:5px;height:637px;background:#d6d6d6"></div>
<div class="r" style="left:1914px;top:250px;width:5px;height:459px;background:#999"></div>
<div class="r" style="left:1507px;top:250px;width:98px;height:34px;border:4px solid #f2a90f;border-radius:7px;box-sizing:border-box"></div>
<div class="r" style="left:1515px;top:292px;width:157px;height:29px;border:4px solid #f2a90f;border-radius:5px;box-sizing:border-box"></div>
<div class="r" style="left:1660px;top:95px;width:116px;height:33px;border:4px solid #f2a90f;border-radius:6px;box-sizing:border-box"></div>
<div class="r" style="left:1507px;top:327px;width:153px;height:54px;border:2px solid #eaa92a;border-radius:7px;box-sizing:border-box"></div>
<div class="r" style="left:1502px;top:393px;width:253px;height:67px;border:2px solid #eaa92a;border-radius:8px;box-sizing:border-box"></div>
<div class="r" style="left:1823px;top:476px;width:87px;height:41px;border:4px solid #f2a90f;border-radius:7px;box-sizing:border-box"></div>
<svg class="r" style="left:7.00px;top:103.00px" width="53.60" height="38.00"><path d="M51.60,19.60 L27.60,33.67 A17,17 0 1 1 28.13,4.66 Z" fill="#f2a90f"/></svg>
<div class="t" style="left:-271px;width:600px;text-align:center;top:112.26px;font-size:18px;color:#fff;font-weight:400;-webkit-text-stroke:0.3px #fff;">1</div>
<svg class="r" style="left:1629.00px;top:76.00px" width="55.00" height="38.00"><path d="M53.00,18.50 L27.71,33.60 A17,17 0 1 1 27.28,4.15 Z" fill="#f2a90f"/></svg>
<div class="t" style="left:1351px;width:600px;text-align:center;top:85.26px;font-size:18px;color:#fff;font-weight:400;-webkit-text-stroke:0.3px #fff;">2</div>
<svg class="r" style="left:1465.00px;top:286.70px" width="53.00" height="38.00"><path d="M51.00,18.70 L28.17,33.32 A17,17 0 1 1 27.90,4.51 Z" fill="#f2a90f"/></svg>
<div class="t" style="left:1187px;width:600px;text-align:center;top:295.96px;font-size:18px;color:#fff;font-weight:400;-webkit-text-stroke:0.3px #fff;">3</div>
<svg class="r" style="left:1456.00px;top:333.00px" width="54.40" height="38.00"><path d="M52.40,18.30 L27.96,33.45 A17,17 0 1 1 27.34,4.19 Z" fill="#f2a90f"/></svg>
<div class="t" style="left:1178px;width:600px;text-align:center;top:342.26px;font-size:18px;color:#fff;font-weight:400;-webkit-text-stroke:0.3px #fff;">4</div>
<svg class="r" style="left:1450.00px;top:402.00px" width="54.00" height="38.00"><path d="M52.00,17.60 L28.36,33.19 A17,17 0 1 1 27.12,4.07 Z" fill="#f2a90f"/></svg>
<div class="t" style="left:1172px;width:600px;text-align:center;top:411.26px;font-size:18px;color:#fff;font-weight:400;-webkit-text-stroke:0.3px #fff;">5</div>
<svg class="r" style="left:1796.00px;top:459.00px" width="51.70" height="38.00"><path d="M49.70,17.50 L29.08,32.69 A17,17 0 1 1 27.70,4.39 Z" fill="#f2a90f"/></svg>
<div class="t" style="left:1518px;width:600px;text-align:center;top:468.26px;font-size:18px;color:#fff;font-weight:400;-webkit-text-stroke:0.3px #fff;">6</div>
</body></html>
